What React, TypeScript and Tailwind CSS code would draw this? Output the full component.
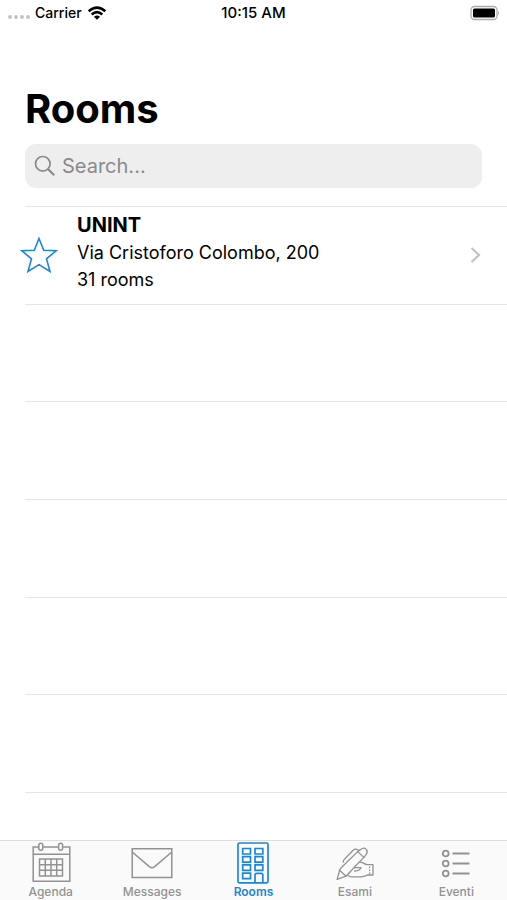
import { useState } from "react";
import type { ReactNode } from "react";

type Tab = { label: string; icon: ReactNode };

const tabs: Tab[] = [
  {
    label: "Agenda",
    icon: (
      <svg width="40" height="42" viewBox="0 0 40 42" fill="none" stroke="currentColor" strokeWidth="1.5" aria-hidden="true">
        <path d="M7.5 5H2.2V39.2H38.8V5H32.2M12 5H27.5" />
        <path d="M2.2 12.2H38.8" />
        <rect x="7.8" y="1.2" width="4" height="7" rx="2" />
        <rect x="27.6" y="1.2" width="4" height="7" rx="2" />
        <path d="M8.5 17H31.5V34H8.5ZM14.3 17V34M20 17V34M25.7 17V34M8.5 22.7H31.5M8.5 28.3H31.5" />
      </svg>
    ),
  },
  {
    label: "Messages",
    icon: (
      <svg width="42" height="42" viewBox="0 0 42 42" fill="none" stroke="currentColor" strokeWidth="1.5" aria-hidden="true">
        <path d="M1.2 6.8H40.8V35.5H1.2Z" />
        <path d="M1.2 10L18.6 24.8Q21 26.5 23.4 24.8L40.8 10" />
      </svg>
    ),
  },
  {
    label: "Rooms",
    icon: (
      <svg width="32" height="42" viewBox="0 0 32 42" fill="none" stroke="currentColor" strokeWidth="1.7" aria-hidden="true">
        <rect x="1" y="1" width="30" height="39.8" rx="1.5" />
        <path d="M5.7 6.5H13.5V12H5.7ZM18 6.5H25.8V12H18ZM5.7 14.7H13.5V20.2H5.7ZM18 14.7H25.8V20.2H18ZM5.7 22.9H13.5V28.4H5.7ZM18 22.9H25.8V28.4H18ZM5.7 31.1H13.5V36.6H5.7Z" />
        <path d="M18 41V33Q18 31.3 19.7 31.3H24.2Q25.8 31.3 25.8 33V41" />
      </svg>
    ),
  },
  {
    label: "Esami",
    icon: (
      <svg width="38" height="42" viewBox="0 0 38 42" fill="none" stroke="currentColor" strokeWidth="1.3" strokeLinecap="round" strokeLinejoin="round" aria-hidden="true">
        <path d="M1.2 37.3L3.4 29Q3.8 27.2 5.2 25.8L21.7 9.6L27.9 15.4L18.2 25.2" />
        <path d="M3.6 28.2L10 34.2L13.4 30.6M1.2 37.3L10 34.2" />
        <path d="M21.7 9.6L25.4 7Q28.2 5.2 30.3 7.4Q32.2 9.6 30.2 12.4L27.9 15.4" />
        <path d="M23.2 8.4L19.6 7.2Q18.5 7 17.7 7.8L8.2 17.4Q7.3 18.4 7.3 20.2" />
        <path d="M23.4 20.2C27 19.8 28.2 22.5 31.2 22.6H37V33H31.2C28.6 34.8 26 34.9 22.5 34.9H16.2C14.3 34.9 12.8 34.2 11.3 32.9" />
        <path d="M12.8 31.2L17.4 26.3Q18.2 25.6 19.4 25.6H25C24.2 28.2 21.6 28.8 18.6 29" />
        <path d="M33.6 25V31.5" strokeDasharray="0.5 2.5" />
      </svg>
    ),
  },
  {
    label: "Eventi",
    icon: (
      <svg width="30" height="42" viewBox="0 0 30 42" fill="none" stroke="currentColor" strokeWidth="1.8" aria-hidden="true">
        <circle cx="4.7" cy="11.5" r="2.9" />
        <circle cx="4.7" cy="21.5" r="2.9" />
        <circle cx="4.7" cy="31.5" r="2.9" />
        <path d="M11.5 11.5H28.5M11.5 21.5H28.5M11.5 31.5H28.5" />
      </svg>
    ),
  },
];

function StatusBar() {
  return (
    <div className="grid h-[26px] grid-cols-3 items-center px-2 text-sm font-medium text-black">
      <div className="flex items-center gap-[5px]">
        <span className="flex gap-[2px] pt-2">
          <i className="size-1 rounded-full bg-[#c4c4c4]" />
          <i className="size-1 rounded-full bg-[#c4c4c4]" />
          <i className="size-1 rounded-full bg-[#c4c4c4]" />
          <i className="size-1 rounded-full bg-[#c4c4c4]" />
        </span>
        <span>Carrier</span>
        <svg width="20" height="14" viewBox="0 0 19 14" fill="none" stroke="black" strokeWidth="2.5" aria-hidden="true">
          <path d="M1.2 5.2Q9.5 -2 17.8 5.2" />
          <path d="M4.2 8.5Q9.5 3.8 14.8 8.5" />
          <path d="M9.5 13.8L6.4 10.7Q9.5 8.2 12.6 10.7Z" fill="black" stroke="none" />
        </svg>
      </div>
      <span className="text-center text-[15px]">10:15 AM</span>
      <svg className="justify-self-end" width="30" height="16" viewBox="0 0 30 16" aria-hidden="true">
        <rect x="2" y="1.5" width="26" height="13" rx="3.5" fill="white" stroke="#adadad" strokeWidth="1.3" />
        <rect x="4" y="3.5" width="22" height="9" rx="1.5" fill="black" />
        <path d="M29 6V10Q30 9.5 30 8T29 6Z" fill="#adadad" />
      </svg>
    </div>
  );
}

export default function App() {
  const [active, setActive] = useState("Rooms");
  return (
    <div className="flex min-h-screen flex-col bg-white font-['Inter','Liberation_Sans',sans-serif] text-black">
      <StatusBar />
      <header className="px-[25px] pt-[58px] pb-[18px]">
        <h1 className="text-[40px] leading-[50px] font-bold">Rooms</h1>
        <label className="mt-[10px] flex h-11 items-center gap-[6px] rounded-[11px] bg-[#eeeeee] px-[9px] text-[#8a8a8e]">
          <svg width="22" height="22" viewBox="0 0 22 22" fill="none" stroke="currentColor" strokeWidth="1.7" aria-hidden="true">
            <circle cx="8.8" cy="8.8" r="7.3" />
            <path d="M14.2 14.2L20.2 20.2" strokeWidth="2.2" />
          </svg>
          <input
            type="text"
            aria-label="Search"
            placeholder="Search..."
            className="min-w-0 flex-1 bg-transparent text-xl outline-none placeholder:text-[#8a8a8e]"
          />
        </label>
      </header>

      <main className="flex flex-1 flex-col">
        <div className="ml-[25px] border-t border-[#e6e6e6]" />
        <section className="flex flex-1 basis-0 items-stretch">
          <button type="button" aria-label="Add UNINT to favourites" className="w-[77px] pl-5">
            <svg width="38" height="38" viewBox="0 0 38 38" fill="none" stroke="#2285cf" strokeWidth="1.6" aria-hidden="true">
              <path d="M19 2.5L23.7 14.2L36 14.8L26.5 22.8L30 35.5L19 28.6L8 35.5L11.5 22.8L2 14.8L14.3 14.2Z" />
            </svg>
          </button>
          <a href="#unint" className="flex flex-1 items-center justify-between pr-[26px]">
            <div className="pb-[6px] text-lg leading-[27px]">
              <h2 className="text-xl leading-[27px] font-bold">UNINT</h2>
              <p>Via Cristoforo Colombo, 200</p>
              <p>31 rooms</p>
            </div>
            <svg width="11" height="16" viewBox="0 0 11 16" fill="none" stroke="#c2c2c5" strokeWidth="2.2" aria-hidden="true">
              <path d="M1.5 1L9 8L1.5 15" />
            </svg>
          </a>
        </section>
        <div className="ml-[25px] flex-1 basis-0 border-t border-[#e6e6e6]" />
        <div className="ml-[25px] flex-1 basis-0 border-t border-[#e6e6e6]" />
        <div className="ml-[25px] flex-1 basis-0 border-t border-[#e6e6e6]" />
        <div className="ml-[25px] flex-1 basis-0 border-t border-[#e6e6e6]" />
        <div className="ml-[25px] flex-1 basis-0 border-t border-[#e6e6e6]" />
        <div className="ml-[25px] h-12 border-t border-[#e6e6e6]" />
      </main>

      <nav className="grid h-[60px] grid-cols-5 border-t border-[#dedede] bg-[#fafafa]">
        {tabs.map((tab) => (
          <button
            key={tab.label}
            type="button"
            onClick={() => setActive(tab.label)}
            className={
              active === tab.label
                ? "flex flex-col items-center pt-px text-xs font-semibold text-[#2285cf]"
                : "flex flex-col items-center pt-px text-xs font-medium text-[#929292]"
            }
          >
            {tab.icon}
            <span className="leading-4">{tab.label}</span>
          </button>
        ))}
      </nav>
    </div>
  );
}
